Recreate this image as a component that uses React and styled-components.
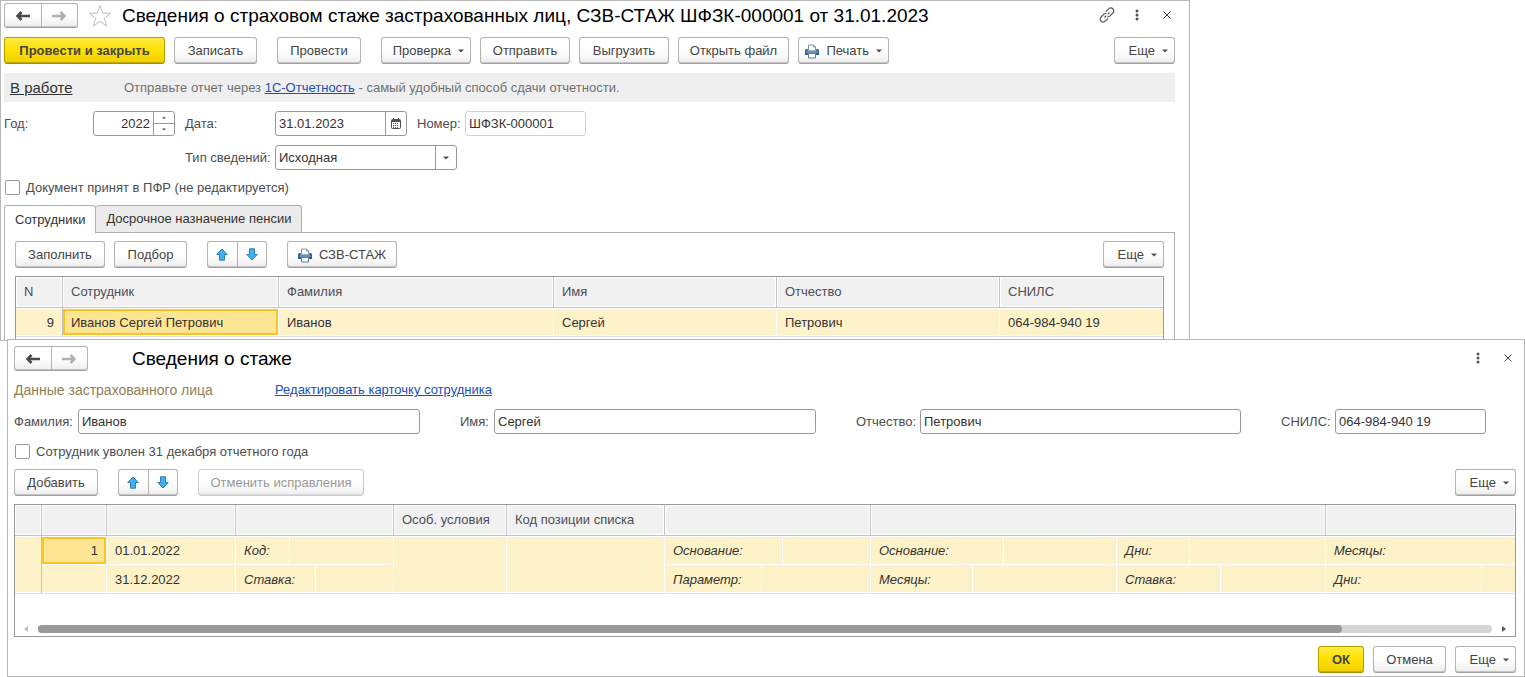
import React from "react";
import styled, { createGlobalStyle, css } from "styled-components";

const GlobalStyle = createGlobalStyle`
  *, *::before, *::after { box-sizing: border-box; }
  body {
    margin: 0;
    background: #fff;
    color: #4d4d4d;
    font: 13px/16px "Liberation Sans", Arial, sans-serif;
  }
  button, input, select { font: inherit; color: inherit; }
`;

/* ---------- windows ---------- */

const Desktop = styled.main`
  display: flex;
  flex-direction: column;
  min-width: 1240px;
`;

const WindowFrame = styled.section`
  display: flex;
  flex-direction: column;
  gap: 9px;
  border: 1px solid #b8b8b8;
  background: #fff;
`;

const DocumentWindow = styled(WindowFrame)`
  margin-right: 335px;
  padding: 2px 14px 0 3px;
`;

const StageWindow = styled(WindowFrame)`
  z-index: 1;
  margin: -2px 0 0 7px;
  padding: 6px 8px 3px 6px;
`;

const TitleBar = styled.header`
  display: flex;
  align-items: center;
  height: 25px;
`;

const Title = styled.h1`
  flex: 1;
  margin: 0 0 0 ${(p) => p.$indent}px;
  color: #000;
  font-size: 19px;
  line-height: 24px;
  font-weight: 400;
  white-space: nowrap;
`;

const WindowTools = styled.div`
  display: flex;
  align-items: center;
  gap: 14px;
  padding-bottom: 2px;
`;

const IconButton = styled.button`
  display: flex;
  align-items: center;
  justify-content: center;
  width: 16px;
  height: 16px;
  padding: 0;
  border: 0;
  background: none;
  color: #4d4d4d;
`;

const StarButton = styled(IconButton)`
  width: 24px;
  height: 24px;
  margin-left: 10px;
`;

/* ---------- buttons ---------- */

const buttonFace = css`
  border: 1px solid #b3b3b3;
  border-bottom-color: #a0a0a0;
  border-radius: 3px;
  background: linear-gradient(#fff 0%, #fff 50%, #ededed 100%);
  box-shadow: inset 0 -1px #c4c4c4;
`;

const Button = styled.button`
  ${buttonFace}
  display: flex;
  align-items: center;
  justify-content: center;
  gap: 7px;
  width: ${(p) => p.$width}px;
  height: 27px;
  padding: 1px 0 0;
  color: #444;
  white-space: nowrap;

  &:disabled {
    border-color: #ccc;
    box-shadow: inset 0 -1px #d9d9d9;
    color: #999;
  }
`;

const PrimaryButton = styled(Button)`
  border-color: #b5a000;
  border-bottom-color: #a39000;
  background: linear-gradient(#ffec40 0%, #ffe000 50%, #efcf00 100%);
  box-shadow: inset 0 -1px #c4ab00;
  font-weight: 700;
`;

const MenuButton = styled(Button)`
  justify-content: flex-end;
  padding-right: 6px;
`;

const Split = styled.div`
  ${buttonFace}
  display: flex;
  width: ${(p) => p.$width}px;
  height: ${(p) => p.$height}px;
`;

const SplitPart = styled.button`
  display: flex;
  flex: 1;
  align-items: center;
  justify-content: center;
  padding: 0;
  border: 0;
  background: none;

  & + & { border-left: 1px solid ${(p) => (p.$soft ? "#d6d6d6" : "#b3b3b3")}; }
`;

const Toolbar = styled.div`
  display: flex;
  align-items: center;
  gap: 20px;
`;

const ButtonGroup = styled.div`
  display: flex;
  gap: 9px;
`;

const Spacer = styled.div`
  flex: 1;
`;

const Footer = styled.footer`
  display: flex;
  justify-content: flex-end;
  gap: 9px;
`;

/* ---------- text and form ---------- */

const InfoBar = styled.div`
  display: flex;
  align-items: center;
  height: 29px;
  padding-left: 6px;
  background: #efefef;
  color: #707070;
`;

const Link = styled.a`
  color: #1a4fb8;
  text-decoration: underline;
`;

const StateLink = styled.a`
  width: 114px;
  color: #333;
  font-size: 15px;
  text-decoration: underline;
`;

const HeaderGrid = styled.div`
  display: grid;
  grid-template-columns: 89px 82px 100px auto;
  row-gap: 9px;
  align-items: center;
`;

const Label = styled.label`
  flex: none;
  width: ${(p) => (p.$width ? `${p.$width}px` : "auto")};
  padding-left: ${(p) => (p.$inset ? 10 : 0)}px;
  white-space: nowrap;
`;

const TypeLabel = styled(Label)`
  grid-column: 3;
`;

const FieldLine = styled.div`
  display: flex;
  align-items: center;
`;

const Field = styled.div`
  display: flex;
  flex: ${(p) => (p.$width ? "none" : "1")};
  width: ${(p) => (p.$width ? `${p.$width}px` : "auto")};
  min-width: 0;
  height: 25px;
  border: 1px solid ${(p) => (p.$readOnly ? "#d2d2d2" : "#999")};
  border-radius: 3px;
  background: #fff;
`;

const inputText = css`
  flex: 1;
  min-width: 0;
  width: 100%;
  margin: 0;
  padding: 0 3px;
  border: 0;
  outline: 0;
  background: none;
  color: #333;
`;

const TextInput = styled.input`
  ${inputText}
  text-align: ${(p) => (p.$right ? "right" : "left")};
`;

const Select = styled.select`
  ${inputText}
  appearance: none;
`;

const FieldAddon = styled.span`
  display: flex;
  align-items: center;
  justify-content: center;
  width: 21px;
  border-left: 1px solid #999;
`;

const AddonButton = styled(FieldAddon).attrs({ as: "button", type: "button" })`
  padding: 0;
  border-width: 0 0 0 1px;
  background: none;
`;

const Spinner = styled.div`
  display: flex;
  flex-direction: column;
  width: 21px;
  border-left: 1px solid #999;
`;

const SpinnerButton = styled.button`
  display: flex;
  flex: 1;
  align-items: center;
  justify-content: center;
  padding: 0;
  border: 0;
  background: none;

  & + & { border-top: 1px solid #999; }
`;

const CheckLabel = styled.label`
  display: flex;
  align-items: center;
  gap: 6px;
  height: 17px;
  padding-left: 1px;
`;

const CheckBox = styled.input`
  appearance: none;
  width: 15px;
  height: 15px;
  margin: 0;
  border: 1px solid #999;
  border-radius: 2px;
  background: #fff;
`;

const SectionLine = styled.div`
  display: flex;
  align-items: center;
  height: 20px;
`;

const SectionTitle = styled.h2`
  width: 261px;
  margin: 0;
  color: #8f7f57;
  font-size: 14px;
  font-weight: 400;
`;

const PersonGrid = styled.div`
  display: grid;
  grid-template-columns: 406fr 356fr 385fr 205px;
  column-gap: 40px;
  padding-right: 30px;
`;

const Stack = styled.div`
  display: flex;
  flex-direction: column;
  gap: 8px;
`;

/* ---------- tabs ---------- */

const TabStrip = styled.div`
  display: flex;
  height: 27px;
`;

const Tab = styled.button`
  height: ${(p) => (p.$active ? 28 : 27)}px;
  padding: 0 10px;
  border: 1px solid #b0b0b0;
  border-bottom: 0;
  border-radius: 3px 3px 0 0;
  background: ${(p) => (p.$active ? "#fff" : "#ebebeb")};
  color: #333;
  white-space: nowrap;
  z-index: ${(p) => (p.$active ? 1 : 0)};

  & + & { border-left: 0; }
`;

const TabPanel = styled.div`
  padding: 8px 10px 0;
  border: 1px solid #b0b0b0;
  border-bottom: 0;
`;

/* ---------- tables ---------- */

const TableBox = styled.div`
  border: 1px solid #999;
  border-bottom-width: ${(p) => (p.$cut ? 0 : 1)}px;
  padding-bottom: 3px;
`;

const Table = styled.table`
  width: 100%;
  table-layout: fixed;
  border-collapse: separate;
  border-spacing: 0;
`;

const Th = styled.th`
  height: 31px;
  padding: 0 8px;
  border-right: 1px solid #c4c4c8;
  border-bottom: 1px solid #c4c4c8;
  background: #f1f1f1;
  box-shadow: inset 0 0 0 1px #fff;
  color: #4d4d55;
  font-weight: 400;
  text-align: left;
  white-space: nowrap;

  &:last-child { border-right: 0; }
`;

const Td = styled.td`
  height: 29px;
  padding: 2px 8px 0;
  border-right: 1px solid ${(p) => (p.$rule ? "#c4c4c8" : "#fff")};
  border-bottom: 1px solid ${(p) => (p.$inner ? "#fff" : "#e0e0e0")};
  background: #fef2c8;
  box-shadow: ${(p) =>
    [
      !p.$lower && "inset 0 1px #fff",
      !p.$inner && "inset 0 -1px #fff",
      p.$selected &&
        `inset 2px 0 #fcc51f, inset -2px 0 #fcc51f, inset 0 3px #fcc51f, inset 0 ${p.$inner ? -2 : -3}px #fcc51f`,
    ]
      .filter(Boolean)
      .join(", ")};
  ${(p) => p.$selected && "background: #fee593;"}
  color: #333;
  text-align: ${(p) => (p.$right ? "right" : "left")};
  white-space: nowrap;

  &:last-child { border-right: 0; }
`;

const PairTd = styled(Td)`
  padding: 0;
`;

const Pair = styled.div`
  display: flex;
  align-items: center;
  width: ${(p) => (p.$width ? `${p.$width}px` : "100%")};
  height: 28px;
  padding: 2px 0 0 8px;
  border-right: ${(p) => (p.$width ? 1 : 0)}px solid #fff;
  font-style: italic;
`;

const ScrollLine = styled.div`
  display: flex;
  align-items: center;
  gap: 9px;
  margin-top: 31px;
  padding: 0 9px;
`;

const ScrollTrack = styled.div`
  flex: 1;
  height: 8px;
  border-radius: 4px;
  background: #d6d6d6;
`;

const ScrollThumb = styled.div`
  width: 89.7%;
  height: 8px;
  border-radius: 4px;
  background: #999;
`;

/* ---------- icons ---------- */

const Caret = () => (
  <svg width="6" height="4" viewBox="0 0 6 4" aria-hidden="true">
    <path d="M0 0.5h6L3 3.5z" fill="#4d4d4d" />
  </svg>
);

const SmallCaret = ({ up }) => (
  <svg width="4" height="3" viewBox="0 0 4 3" aria-hidden="true">
    <path d={up ? "M0 2.5h4L2 0.5z" : "M0 0.5h4L2 2.5z"} fill="#4d4d4d" />
  </svg>
);

const NavArrow = ({ forward }) => (
  <svg width="14" height="10" viewBox="0 0 14 10" aria-hidden="true">
    <path
      d={forward ? "M0 5h12M8.5 1l4 4-4 4" : "M14 5H2M5.500 1l-4 4 4 4"}
      fill="none"
      stroke={forward ? "#b0b0b0" : "#4a4a4a"}
      strokeWidth="2.6"
    />
  </svg>
);

const MoveArrow = ({ down }) => (
  <svg width="12" height="13" viewBox="0 0 12 13" aria-hidden="true">
    <path
      d={down ? "M3.500 .8h5v5.700h2.700L6 12 .8 6.500h2.700z" : "M3.500 12.200h5V6.500h2.700L6 1 .8 6.500h2.700z"}
      fill="#41b0ee"
      stroke="#2b7fb3"
      strokeLinejoin="round"
    />
  </svg>
);

const Star = () => (
  <svg width="24" height="24" viewBox="0 0 24 24" aria-hidden="true">
    <path
      d="M12 1.500l2.700 7.700h8.100l-6.500 4.900 2.500 8.100L12 17.300l-6.800 4.900 2.500-8.100L1.200 9.200h8.100z"
      fill="#fff"
      stroke="#b9bfc7"
    />
  </svg>
);

const ChainIcon = () => (
  <svg width="16" height="16" viewBox="0 0 16 16" fill="none" stroke="#555" strokeWidth="1.200" aria-hidden="true">
    <path d="M7 4.500l2.700-2.700a2.900 2.900 0 0 1 4.200 0 2.900 2.900 0 0 1 0 4.200L11 8.900a2.900 2.900 0 0 1-2.500.8" />
    <path d="M9 11.500l-2.700 2.700a2.900 2.900 0 0 1-4.200 0 2.900 2.900 0 0 1 0-4.200L5 7.100a2.900 2.900 0 0 1 2.500-.8" />
    <path d="M5.500 10.500l1.800-1.800M8.700 7.300l1.800-1.800" />
  </svg>
);

const Dots = () => (
  <svg width="4" height="12" viewBox="0 0 4 12" fill="#555" aria-hidden="true">
    <circle cx="2" cy="2" r="1.500" />
    <circle cx="2" cy="6" r="1.500" />
    <circle cx="2" cy="10" r="1.500" />
  </svg>
);

const Cross = () => (
  <svg width="8" height="8" viewBox="0 0 8 8" aria-hidden="true">
    <path d="M.5.5l7 7M7.500.5l-7 7" stroke="#444" strokeWidth="1" />
  </svg>
);

const Printer = () => (
  <svg width="14" height="15" viewBox="0 0 14 15" aria-hidden="true">
    <path d="M3.500 6V1h5l2 2v3" fill="#fff" stroke="#7d93ab" />
    <path d="M8.500 1v2h2" fill="none" stroke="#7d93ab" />
    <path d="M1.500 5h1.200v1.500h8.600V5h1.200A1.500 1.500 0 0 1 14 6.500V11H0V6.500A1.500 1.500 0 0 1 1.500 5z" fill="#33618f" />
    <path d="M1.500 8h11" stroke="#a9c3da" />
    <path d="M3.500 9.500h7v4.500h-7z" fill="#fff" stroke="#5b7fa3" />
  </svg>
);

const CalendarIcon = () => (
  <svg width="10" height="11" viewBox="0 0 10 11" aria-hidden="true">
    <rect x=".5" y="1.500" width="9" height="9" rx="1" fill="#fff" stroke="#4d4d4d" />
    <path d="M1 3h8" stroke="#4d4d4d" strokeWidth="2" />
    <path d="M2.500 0v2M7.500 0v2" stroke="#4d4d4d" />
    <path d="M2 5.500h6M2 7.500h6M2 9.300h6" stroke="#4d4d4d" strokeDasharray="1 1" />
  </svg>
);

const ScrollArrow = ({ right }) => (
  <svg width="5" height="6" viewBox="0 0 5 6" aria-hidden="true">
    <path d={right ? "M1 0v6l4-3z" : "M4 0v6L0 3z"} fill={right ? "#555" : "#bbb"} />
  </svg>
);

/* ---------- composed parts ---------- */

const NavButtons = () => (
  <Split $width={74} $height={25}>
    <SplitPart $soft aria-label="Назад"><NavArrow /></SplitPart>
    <SplitPart $soft aria-label="Вперед"><NavArrow forward /></SplitPart>
  </Split>
);

const MoveButtons = () => (
  <Split $width={60} $height={27}>
    <SplitPart aria-label="Переместить вверх"><MoveArrow /></SplitPart>
    <SplitPart aria-label="Переместить вниз"><MoveArrow down /></SplitPart>
  </Split>
);

const MoreButton = () => (
  <MenuButton $width={61}>Еще <Caret /></MenuButton>
);

const PersonField = ({ id, label, labelWidth, value }) => (
  <FieldLine>
    <Label htmlFor={id} $width={labelWidth}>{label}</Label>
    <Field><TextInput id={id} defaultValue={value} /></Field>
  </FieldLine>
);

const PairCell = ({ label, width, ...rest }) => (
  <PairTd {...rest}><Pair $width={width}>{label}</Pair></PairTd>
);

const Columns = ({ widths }) => (
  <colgroup>
    {widths.map((w, i) => <col key={i} width={w} />)}
    <col />
  </colgroup>
);

const employeeHeads = ["N", "Сотрудник", "Фамилия", "Имя", "Отчество", "СНИЛС"];

export default function App() {
  return (
    <Desktop>
      <GlobalStyle />
      <DocumentWindow>
        <TitleBar>
          <NavButtons />
          <StarButton aria-label="В избранное"><Star /></StarButton>
          <Title $indent={10}>
            Сведения о страховом стаже застрахованных лиц, СЗВ-СТАЖ ШФЗК-000001 от 31.01.2023
          </Title>
          <WindowTools>
            <IconButton aria-label="Получить ссылку"><ChainIcon /></IconButton>
            <IconButton aria-label="Меню"><Dots /></IconButton>
            <IconButton aria-label="Закрыть"><Cross /></IconButton>
          </WindowTools>
        </TitleBar>

        <Toolbar>
          <ButtonGroup>
            <PrimaryButton $width={161}>Провести и закрыть</PrimaryButton>
            <Button $width={83}>Записать</Button>
          </ButtonGroup>
          <Button $width={84}>Провести</Button>
          <ButtonGroup>
            <MenuButton $width={90}>Проверка <Caret /></MenuButton>
            <Button $width={90}>Отправить</Button>
            <Button $width={90}>Выгрузить</Button>
            <Button $width={111}>Открыть файл</Button>
            <MenuButton $width={91}><Printer />Печать <Caret /></MenuButton>
          </ButtonGroup>
          <Spacer />
          <MoreButton />
        </Toolbar>

        <InfoBar>
          <StateLink href="#state">В работе</StateLink>
          <span>
            Отправьте отчет через <Link href="#report">1С-Отчетность</Link> - самый удобный способ сдачи отчетности.
          </span>
        </InfoBar>

        <HeaderGrid>
          <Label htmlFor="year">Год:</Label>
          <Field $width={82}>
            <TextInput id="year" $right defaultValue="2022" />
            <Spinner>
              <SpinnerButton aria-label="Больше"><SmallCaret up /></SpinnerButton>
              <SpinnerButton aria-label="Меньше"><SmallCaret /></SpinnerButton>
            </Spinner>
          </Field>
          <Label htmlFor="date" $inset>Дата:</Label>
          <FieldLine>
            <Field $width={132}>
              <TextInput id="date" defaultValue="31.01.2023" />
              <AddonButton aria-label="Выбрать дату"><CalendarIcon /></AddonButton>
            </Field>
            <Label htmlFor="number" $inset $width={58}>Номер:</Label>
            <Field $width={121} $readOnly>
              <TextInput id="number" readOnly defaultValue="ШФЗК-000001" />
            </Field>
          </FieldLine>
          <TypeLabel htmlFor="kind" $inset>Тип сведений:</TypeLabel>
          <Field $width={182}>
            <Select id="kind" defaultValue="Исходная">
              <option>Исходная</option>
            </Select>
            <FieldAddon><Caret /></FieldAddon>
          </Field>
        </HeaderGrid>

        <CheckLabel>
          <CheckBox type="checkbox" />
          Документ принят в ПФР (не редактируется)
        </CheckLabel>

        <div>
          <TabStrip role="tablist">
            <Tab role="tab" aria-selected="true" $active>Сотрудники</Tab>
            <Tab role="tab" aria-selected="false">Досрочное назначение пенсии</Tab>
          </TabStrip>
          <TabPanel role="tabpanel">
            <Stack>
              <Toolbar>
                <ButtonGroup>
                  <Button $width={90}>Заполнить</Button>
                  <Button $width={73}>Подбор</Button>
                </ButtonGroup>
                <MoveButtons />
                <Button $width={110}><Printer />СЗВ-СТАЖ</Button>
                <Spacer />
                <MoreButton />
              </Toolbar>
              <TableBox $cut>
                <Table>
                  <Columns widths={[47, 216, 275, 223, 223]} />
                  <thead>
                    <tr>{employeeHeads.map((h) => <Th key={h}>{h}</Th>)}</tr>
                  </thead>
                  <tbody>
                    <tr>
                      <Td $right $rule>9</Td>
                      <Td $selected>Иванов Сергей Петрович</Td>
                      <Td>Иванов</Td>
                      <Td>Сергей</Td>
                      <Td>Петрович</Td>
                      <Td>064-984-940 19</Td>
                    </tr>
                  </tbody>
                </Table>
              </TableBox>
            </Stack>
          </TabPanel>
        </div>
      </DocumentWindow>

      <StageWindow>
        <TitleBar>
          <NavButtons />
          <Title $indent={44}>Сведения о стаже</Title>
          <WindowTools>
            <IconButton aria-label="Меню"><Dots /></IconButton>
            <IconButton aria-label="Закрыть"><Cross /></IconButton>
          </WindowTools>
        </TitleBar>

        <SectionLine>
          <SectionTitle>Данные застрахованного лица</SectionTitle>
          <Link href="#card">Редактировать карточку сотрудника</Link>
        </SectionLine>

        <PersonGrid>
          <PersonField id="surname" label="Фамилия:" labelWidth={64} value="Иванов" />
          <PersonField id="name" label="Имя:" labelWidth={34} value="Сергей" />
          <PersonField id="patronymic" label="Отчество:" labelWidth={64} value="Петрович" />
          <PersonField id="snils" label="СНИЛС:" labelWidth={54} value="064-984-940 19" />
        </PersonGrid>

        <CheckLabel>
          <CheckBox type="checkbox" />
          Сотрудник уволен 31 декабря отчетного года
        </CheckLabel>

        <Stack>
          <Toolbar>
            <Button $width={84}>Добавить</Button>
            <MoveButtons />
            <Button $width={166} disabled>Отменить исправления</Button>
            <Spacer />
            <MoreButton />
          </Toolbar>
          <TableBox>
            <Table>
              <Columns widths={[27, 65, 129, 158, 113, 158, 206, 246, 209]} />
              <thead>
                <tr>
                  <Th /><Th /><Th /><Th />
                  <Th>Особ. условия</Th>
                  <Th>Код позиции списка</Th>
                  <Th />
                  <Th colSpan={2} />
                  <Th />
                </tr>
              </thead>
              <tbody>
                <tr>
                  <Td rowSpan={2} $rule />
                  <Td $inner $right $selected>1</Td>
                  <Td $inner>01.01.2022</Td>
                  <PairCell $inner label="Код:" width={54} />
                  <Td rowSpan={2} />
                  <Td rowSpan={2} />
                  <PairCell $inner label="Основание:" width={118} />
                  <PairCell $inner label="Основание:" width={133} />
                  <PairCell $inner label="Дни:" width={73} />
                  <PairCell $inner label="Месяцы:" />
                </tr>
                <tr>
                  <Td $lower />
                  <Td $lower>31.12.2022</Td>
                  <PairCell $lower label="Ставка:" width={80} />
                  <PairCell $lower label="Параметр:" width={97} />
                  <PairCell $lower label="Месяцы:" width={102} />
                  <PairCell $lower label="Ставка:" width={104} />
                  <PairCell $lower label="Дни:" width={156} />
                </tr>
              </tbody>
            </Table>
            <ScrollLine>
              <ScrollArrow />
              <ScrollTrack><ScrollThumb /></ScrollTrack>
              <ScrollArrow right />
            </ScrollLine>
          </TableBox>
        </Stack>

        <Footer>
          <PrimaryButton $width={46}>ОК</PrimaryButton>
          <Button $width={73}>Отмена</Button>
          <MoreButton />
        </Footer>
      </StageWindow>
    </Desktop>
  );
}
